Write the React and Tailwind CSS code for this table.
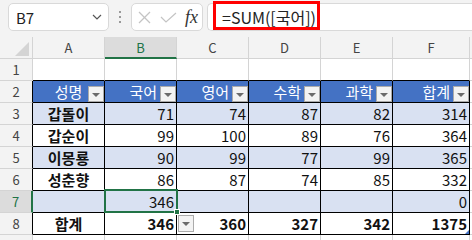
import React from "react";

const HEAD = ["성명", "국어", "영어", "수학", "과학", "합계"];
const LETTERS = ["A", "B", "C", "D", "E", "F"];
const BODY = [
  ["갑돌이", 71, 74, 87, 82, 314],
  ["갑순이", 99, 100, 89, 76, 364],
  ["이몽룡", 90, 99, 77, 99, 365],
  ["성춘향", 86, 87, 74, 85, 332],
  ["", 346, "", "", "", 0],
  ["합계", 346, 360, 327, 342, 1375],
];

function Drop({ className }) {
  return (
    <div
      className={
        "absolute w-[16px] h-[16px] bg-[#f3f3f3] border border-[#ababab] flex items-center justify-center z-10 " +
        className
      }
    >
      <div className="w-0 h-0 border-l-[4px] border-r-[4px] border-t-[4px] border-l-transparent border-r-transparent border-t-[#6b6b6b] mt-[1px]" />
    </div>
  );
}

function RowHead({ n, sel, table }) {
  const base =
    "flex items-center justify-center text-[13px] border-b border-[#d4d4d4] ";
  if (sel)
    return (
      <div className={base + "bg-[#dcdcdc] text-[#217346] border-r-2 border-r-[#217346]"}>
        {n}
      </div>
    );
  return (
    <div
      className={
        base +
        "bg-[#f3f3f3] text-[#444] border-r " +
        (table ? "border-r-black" : "border-r-[#d4d4d4]")
      }
    >
      {n}
    </div>
  );
}

export default function App() {
  return (
    <div className="w-[472px] h-[240px] overflow-hidden bg-white font-['Noto_Sans_CJK_KR',sans-serif] relative">
      {/* Formula bar */}
      <div className="h-[37px] bg-[#f3f3f3] flex items-start pt-[3px] relative">
        <div className="ml-[8px] w-[101px] h-[28px] bg-white rounded-[5px] border border-[#d9d9d9] flex items-center justify-between pl-[7px] pr-[6px]">
          <span className="text-[15px] leading-none text-[#222]">B7</span>
          <svg width="10" height="6" viewBox="0 0 10 6">
            <polyline points="1,1 5,5 9,1" fill="none" stroke="#555" strokeWidth="1.2" />
          </svg>
        </div>
        <div className="w-[22px] h-[28px] flex flex-col items-center justify-center gap-[3px]">
          <div className="w-[2px] h-[2px] bg-[#999]" />
          <div className="w-[2px] h-[2px] bg-[#999]" />
          <div className="w-[2px] h-[2px] bg-[#999]" />
        </div>
        <div className="w-[72px] h-[28px] bg-white rounded-[5px] border border-[#d9d9d9] flex items-center pl-[5px]">
          <svg width="13" height="13" viewBox="0 0 13 13" className="ml-[1px]">
            <line x1="1" y1="1" x2="12" y2="12" stroke="#c4c4c4" strokeWidth="1.2" />
            <line x1="12" y1="1" x2="1" y2="12" stroke="#c4c4c4" strokeWidth="1.2" />
          </svg>
          <svg width="17" height="11" viewBox="0 0 17 11" className="ml-[9px]">
            <polyline points="1,5 6,10 16,1" fill="none" stroke="#c4c4c4" strokeWidth="1.2" />
          </svg>
          <span className="ml-[8px] font-['Liberation_Serif',serif] italic text-[18px] leading-none text-[#333]">
            fx
          </span>
        </div>
        <div className="ml-[4px] flex-1 h-[28px] bg-white rounded-l-[5px] border border-r-0 border-[#d9d9d9] flex items-center pl-[14px]">
          <span className="text-[16px] leading-none text-[#222]">=SUM([국어])</span>
        </div>
        <div className="absolute left-[213px] top-[1px] w-[107px] h-[29px] border-[3px] border-[#ff0000]" />
      </div>

      {/* Grid */}
      <div className="grid grid-cols-[33px_72px_72px_72px_72px_72px_77px_1fr] auto-rows-[22px] text-[15px] leading-none">
        {/* column headers */}
        <div className="bg-[#f3f3f3] border-r border-b border-[#d4d4d4] relative">
          <svg width="14" height="14" viewBox="0 0 14 14" className="absolute left-[15px] top-[5px]">
            <polygon points="14,0 14,14 0,14" fill="#d4d4d4" />
          </svg>
        </div>
        {LETTERS.map((l) =>
          l === "B" ? (
            <div
              key={l}
              className="bg-[#dcdcdc] text-[#217346] text-[13px] border-r border-[#d4d4d4] border-b-2 border-b-[#217346] flex items-center justify-center"
            >
              {l}
            </div>
          ) : (
            <div
              key={l}
              className="bg-[#f3f3f3] text-[#444] text-[13px] border-r border-b border-[#d4d4d4] flex items-center justify-center"
            >
              {l}
            </div>
          )
        )}
        <div className="bg-[#f3f3f3] border-b border-[#d4d4d4]" />

        {/* row 1 */}
        <RowHead n={1} />
        {LETTERS.map((l) => (
          <div key={l} className="border-r border-r-[#d4d4d4] border-b border-b-black" />
        ))}
        <div className="border-b border-[#d4d4d4]" />

        {/* row 2 header */}
        <RowHead n={2} table />
        {HEAD.map((h, i) => (
          <div
            key={h}
            className={
              "relative bg-[#4472c4] text-white border-r border-b border-black flex items-center " +
              (i === 0 ? "justify-center" : "justify-end pr-[19px]")
            }
          >
            <span>{h}</span>
            <Drop className="right-0 bottom-0" />
          </div>
        ))}
        <div className="border-b border-[#d4d4d4]" />

        {/* body rows */}
        {BODY.map((row, ri) => {
          const rn = ri + 3;
          const band = rn % 2 === 1;
          const total = rn === 8;
          return (
            <React.Fragment key={rn}>
              <RowHead n={rn} table sel={rn === 7} />
              {row.map((v, ci) => (
                <div
                  key={ci}
                  className={
                    "relative border-r border-b border-black flex items-center text-[#111] " +
                    (band ? "bg-[#d9e1f2] " : "bg-white ") +
                    (total ? "font-bold " : "") +
                    (ci === 0 ? "justify-center font-bold" : "justify-end pr-[2px]")
                  }
                >
                  <span>{v}</span>
                  {rn === 7 && ci === 1 && (
                    <div className="absolute -left-[1px] -top-[2px] -right-[2px] -bottom-[1px] border-2 border-[#217346] z-10">
                      <div className="absolute -right-[4px] -bottom-[4px] w-[6px] h-[6px] bg-[#217346] border border-white" />
                    </div>
                  )}
                  {total && ci === 1 && (
                    <div className="absolute left-[73px] top-[2px] w-[16px] h-[17px] bg-[#f3f3f3] border border-[#ababab] flex items-center justify-center z-20">
                      <div className="w-0 h-0 border-l-[4px] border-r-[4px] border-t-[4px] border-l-transparent border-r-transparent border-t-[#6b6b6b]" />
                    </div>
                  )}
                  {total && ci === 5 && (
                    <svg width="4" height="4" viewBox="0 0 4 4" className="absolute right-0 bottom-0">
                      <polygon points="4,0 4,4 0,4" fill="#4472c4" />
                    </svg>
                  )}
                </div>
              ))}
              <div className="border-b border-[#d4d4d4]" />
            </React.Fragment>
          );
        })}

        {/* row 9 partial (number cut off by window edge) */}
        <div className="bg-[#f3f3f3] border-r border-[#d4d4d4]" />
        {LETTERS.map((l) => (
          <div key={l} className="border-r border-[#d4d4d4]" />
        ))}
        <div />
      </div>
    </div>
  );
}
